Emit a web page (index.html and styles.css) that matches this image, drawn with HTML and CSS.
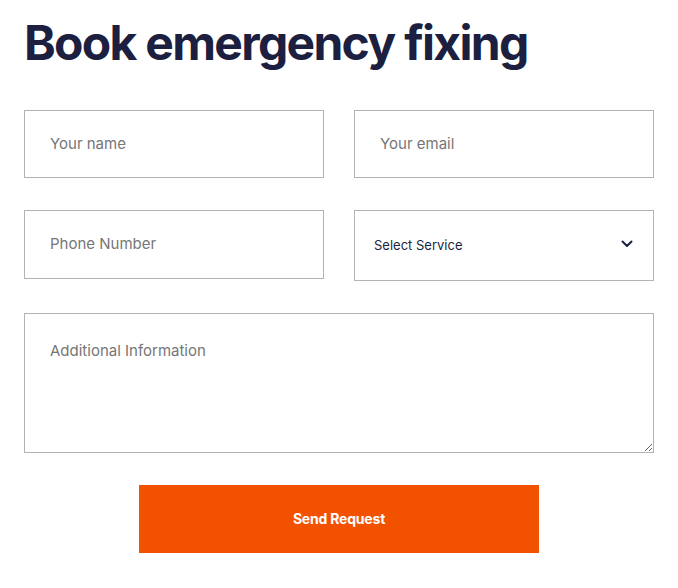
FILE: index.html
```html
<!DOCTYPE html>
<html lang="en">
<head>
<meta charset="utf-8">
<title>Book emergency fixing</title>
<link rel="stylesheet" href="styles.css">
</head>
<body>
<div class="wrap">
  <h1 class="title">Book emergency fixing</h1>
  <form class="form">
    <div class="grid">
      <input class="field" type="text" placeholder="Your name">
      <input class="field" type="email" placeholder="Your email">
      <input class="field field-tall" type="tel" placeholder="Phone Number">
      <div class="select-wrap">
        <select class="select">
          <option>Select Service</option>
        </select>
        <svg class="chev" width="12" height="8" viewBox="0 0 12 8"><path d="M1.5 1.5 L6 6 L10.5 1.5" fill="none" stroke="#1c1f3f" stroke-width="2" stroke-linecap="round" stroke-linejoin="round"/></svg>
      </div>
    </div>
    <textarea class="area" placeholder="Additional Information"></textarea>
    <div class="actions">
      <button class="btn" type="button">Send Request</button>
    </div>
  </form>
</div>
</body>
</html>
```

FILE: styles.css
```css
* { box-sizing: border-box; }
body { margin: 0; background: #fff; font-family: Inter, "Noto Sans", sans-serif; }
.wrap { padding: 0 24px; width: 678px; }
.title {
  margin: 13px 0 0;
  font-size: 48px;
  line-height: 60px;
  font-weight: 700;
  letter-spacing: -1.7px;
  color: #1c1f3f;
}
.form { margin-top: 37px; width: 630px; }
.grid {
  display: grid;
  grid-template-columns: 300px 300px;
  column-gap: 30px;
  row-gap: 32px;
  align-items: start;
}
.field {
  display: block;
  width: 300px;
  height: 68px;
  border: 1px solid #b3b3b3;
  border-radius: 0;
  padding: 0 25px 2px;
  font-family: Inter, sans-serif;
  font-size: 15px;
  color: #1c1f3f;
  outline: none;
  background: #fff;
}
.field-tall { height: 69px; }
.field::placeholder, .area::placeholder { color: #767676; opacity: 1; }
.select-wrap { position: relative; }
.select {
  display: block;
  width: 300px;
  height: 71px;
  border: 1px solid #b3b3b3;
  border-radius: 0;
  padding: 0 19px 2px;
  font-family: Inter, sans-serif;
  font-size: 13px;
  color: #1c1f3f;
  background: #fff;
  appearance: none;
  -webkit-appearance: none;
  outline: none;
}
.chev { position: absolute; right: 21px; top: 30px; }
.area {
  display: block;
  margin-top: 32px;
  width: 630px;
  height: 140px;
  border: 1px solid #b3b3b3;
  border-radius: 0;
  padding: 27px 25px;
  font-family: Inter, sans-serif;
  font-size: 15px;
  color: #1c1f3f;
  outline: none;
  resize: vertical;
}
.actions { display: flex; justify-content: center; margin-top: 32px; }
.btn {
  width: 400px;
  height: 68px;
  border: 0;
  border-radius: 0;
  background: #f25100;
  color: #fff;
  font-family: Inter, sans-serif;
  font-weight: 700;
  font-size: 14px;
  letter-spacing: -0.2px;
  padding-bottom: 2px;
}
```
